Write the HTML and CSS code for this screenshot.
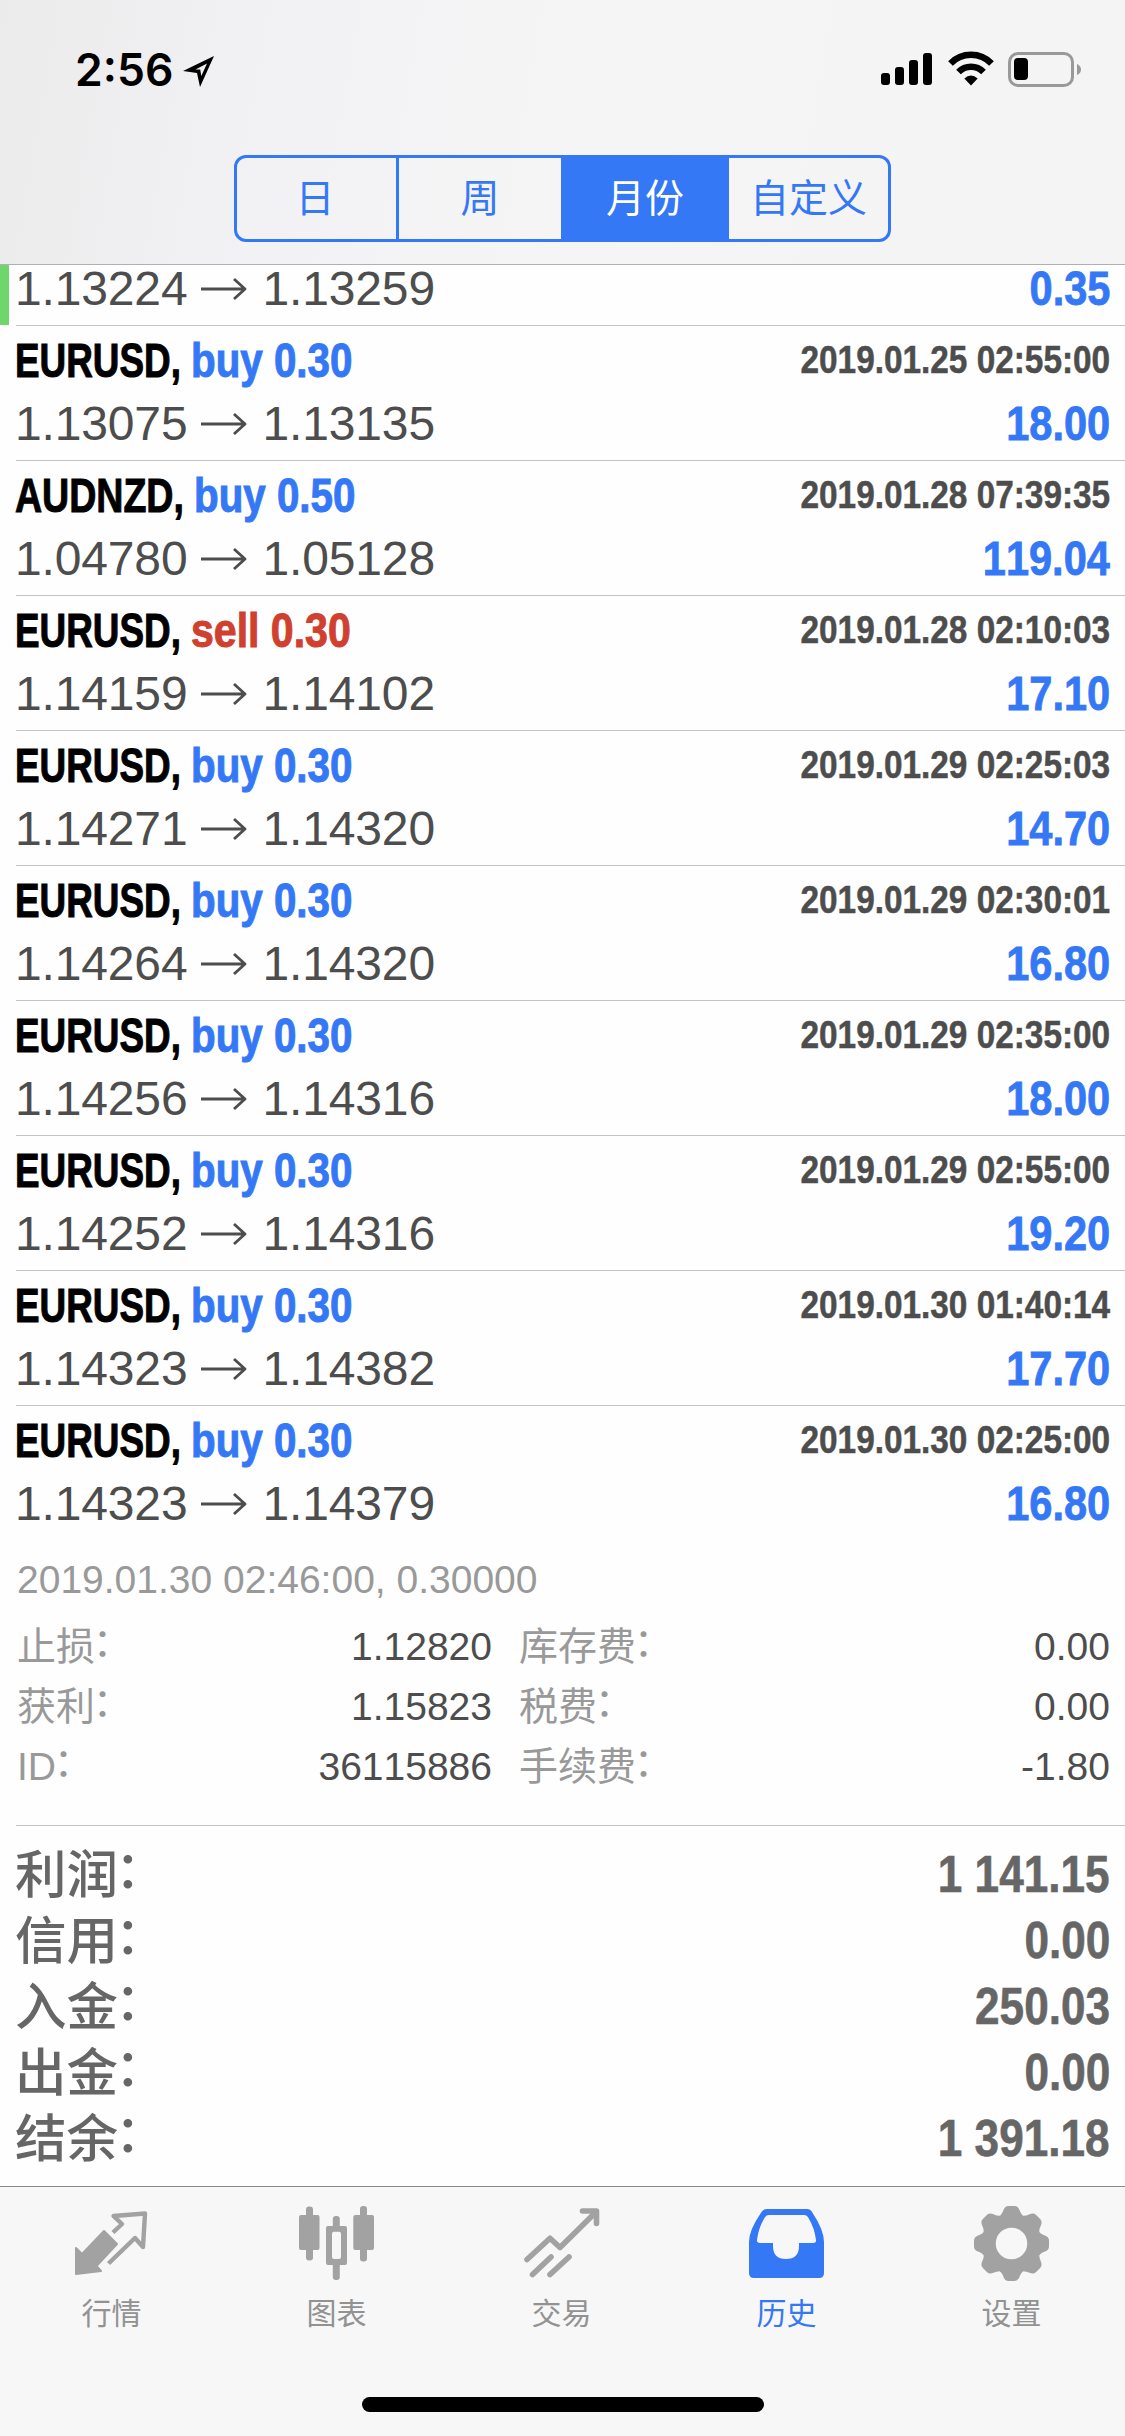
FILE: index.html
```html
<!DOCTYPE html>
<html lang="zh-CN">
<head>
<meta charset="utf-8">
<title>历史</title>
<link rel="stylesheet" href="styles.css">
</head>
<body>
<svg class="defs" width="0" height="0">
  <symbol id="arrow" viewBox="0 0 48 24"><path d="M0 13H44M33 3L44 13L33 23" fill="none" stroke="currentColor" stroke-width="2.8" stroke-linejoin="round"/></symbol>
</svg>

<header class="header">
  <div class="status">
    <span class="time">2:56</span>
    <svg class="location" width="36" height="36" viewBox="0 0 36 36"><path fill-rule="evenodd" d="M3 18L34 3L20 34L17 20ZM15.500 16.600L27 10.500L21.300 23L20.200 16.400Z"/></svg>
    <div class="indicators">
      <svg width="52" height="34" viewBox="0 0 52 34"><rect x="0" y="21" width="9" height="12" rx="3"/><rect x="14" y="15" width="9" height="18" rx="3"/><rect x="28" y="8" width="9" height="25" rx="3"/><rect x="42" y="1" width="9" height="32" rx="3"/></svg>
      <svg width="46" height="34" viewBox="0 0 46 34"><path d="M2.500 11.500A28.500 28.500 0 0 1 43.500 11.500M10.500 20A17.500 17.500 0 0 1 35.500 20" fill="none" stroke="#000" stroke-width="6.500"/><path d="M23 33.500L16.300 26.500Q23 20.500 29.700 26.500Z"/></svg>
      <svg width="74" height="36" viewBox="0 0 74 36"><rect x="1.500" y="1.500" width="63" height="32" rx="8.500" fill="none" stroke="#999" stroke-width="3"/><rect x="6" y="6" width="14" height="22" rx="4"/><path d="M69 12Q73 14 73 17.500T69 23Z" fill="#999"/></svg>
    </div>
  </div>
  <nav class="segments">
    <span class="segment segment-ruled">日</span><span class="segment">周</span><span class="segment segment-on">月份</span><span class="segment">自定义</span>
  </nav>
</header>

<main class="content">
  <section class="deal deal-cut">
    <div class="prices"><span>1.13224</span><svg class="arrow"><use href="#arrow"/></svg><span>1.13259</span><b class="profit">0.35</b></div>
  </section>
  <section class="deal">
    <div class="title"><b class="symbol">EURUSD,</b><b class="side">buy 0.30</b><b class="date">2019.01.25 02:55:00</b></div>
    <div class="prices"><span>1.13075</span><svg class="arrow"><use href="#arrow"/></svg><span>1.13135</span><b class="profit">18.00</b></div>
  </section>
  <section class="deal">
    <div class="title"><b class="symbol symbol-wide">AUDNZD,</b><b class="side">buy 0.50</b><b class="date">2019.01.28 07:39:35</b></div>
    <div class="prices"><span>1.04780</span><svg class="arrow"><use href="#arrow"/></svg><span>1.05128</span><b class="profit">119.04</b></div>
  </section>
  <section class="deal">
    <div class="title"><b class="symbol">EURUSD,</b><b class="side side-sell">sell 0.30</b><b class="date">2019.01.28 02:10:03</b></div>
    <div class="prices"><span>1.14159</span><svg class="arrow"><use href="#arrow"/></svg><span>1.14102</span><b class="profit">17.10</b></div>
  </section>
  <section class="deal">
    <div class="title"><b class="symbol">EURUSD,</b><b class="side">buy 0.30</b><b class="date">2019.01.29 02:25:03</b></div>
    <div class="prices"><span>1.14271</span><svg class="arrow"><use href="#arrow"/></svg><span>1.14320</span><b class="profit">14.70</b></div>
  </section>
  <section class="deal">
    <div class="title"><b class="symbol">EURUSD,</b><b class="side">buy 0.30</b><b class="date">2019.01.29 02:30:01</b></div>
    <div class="prices"><span>1.14264</span><svg class="arrow"><use href="#arrow"/></svg><span>1.14320</span><b class="profit">16.80</b></div>
  </section>
  <section class="deal">
    <div class="title"><b class="symbol">EURUSD,</b><b class="side">buy 0.30</b><b class="date">2019.01.29 02:35:00</b></div>
    <div class="prices"><span>1.14256</span><svg class="arrow"><use href="#arrow"/></svg><span>1.14316</span><b class="profit">18.00</b></div>
  </section>
  <section class="deal">
    <div class="title"><b class="symbol">EURUSD,</b><b class="side">buy 0.30</b><b class="date">2019.01.29 02:55:00</b></div>
    <div class="prices"><span>1.14252</span><svg class="arrow"><use href="#arrow"/></svg><span>1.14316</span><b class="profit">19.20</b></div>
  </section>
  <section class="deal">
    <div class="title"><b class="symbol">EURUSD,</b><b class="side">buy 0.30</b><b class="date">2019.01.30 01:40:14</b></div>
    <div class="prices"><span>1.14323</span><svg class="arrow"><use href="#arrow"/></svg><span>1.14382</span><b class="profit">17.70</b></div>
  </section>
  <section class="deal deal-open">
    <div class="title"><b class="symbol">EURUSD,</b><b class="side">buy 0.30</b><b class="date">2019.01.30 02:25:00</b></div>
    <div class="prices"><span>1.14323</span><svg class="arrow"><use href="#arrow"/></svg><span>1.14379</span><b class="profit">16.80</b></div>
    <div class="details">
      <p class="closed">2019.01.30 02:46:00, 0.30000</p>
      <dl class="facts">
        <dt>止损<span class="colon">：</span></dt><dd>1.12820</dd><dt>库存费<span class="colon">：</span></dt><dd>0.00</dd>
        <dt>获利<span class="colon">：</span></dt><dd>1.15823</dd><dt>税费<span class="colon">：</span></dt><dd>0.00</dd>
        <dt>ID<span class="colon">：</span></dt><dd>36115886</dd><dt>手续费<span class="colon">：</span></dt><dd>-1.80</dd>
      </dl>
    </div>
  </section>
  <section class="totals">
    <div class="total"><span>利润<span class="colon">：</span></span><b>1 141.15</b></div>
    <div class="total"><span>信用<span class="colon">：</span></span><b>0.00</b></div>
    <div class="total"><span>入金<span class="colon">：</span></span><b>250.03</b></div>
    <div class="total"><span>出金<span class="colon">：</span></span><b>0.00</b></div>
    <div class="total"><span>结余<span class="colon">：</span></span><b>1 391.18</b></div>
  </section>
</main>

<footer class="footer">
  <nav class="tabs">
    <a class="tab"><svg class="icon" viewBox="0 0 75 75"><path fill="currentColor" stroke="currentColor" stroke-width="2" stroke-linejoin="round" d="M1 42L7 48L29 25L42 38L21.500 60L26 65L1 68Z"/><path d="M38 26.500L47 18L38.500 10L70 7.500L68 41L60 32L33.500 57.500" fill="none" stroke="currentColor" stroke-width="4.400" stroke-linejoin="round"/></svg>行情</a>
    <a class="tab"><svg class="icon" viewBox="0 0 75 75"><g fill="currentColor"><rect x="6" y="0.500" width="7" height="54" rx="3"/><rect x="-1" y="9" width="20.500" height="35" rx="2"/><rect x="60" y="0" width="7" height="55.500" rx="3"/><rect x="53.300" y="9" width="20.700" height="35" rx="2"/><rect x="32.800" y="10" width="7" height="14" rx="3"/><rect x="32.800" y="55" width="7" height="19" rx="3"/><path fill-rule="evenodd" d="M28 20H45Q47 20 47 22V57Q47 59 45 59H28Q26 59 26 57V22Q26 20 28 20ZM34 25.700Q32 25.700 32 27.700V51Q32 53 34 53H39Q41 53 41 51V27.700Q41 25.700 39 25.700Z"/></g></svg>图表</a>
    <a class="tab"><svg class="icon" viewBox="0 0 75 75"><path d="M2 53.500L25 32.300L35 41.500L71 6M57.500 5H71.500V17.500M7.500 68.500L26 51M25 68.500L44 51" fill="none" stroke="currentColor" stroke-width="5.600" stroke-linecap="round" stroke-linejoin="round"/></svg>交易</a>
    <a class="tab tab-on"><svg class="icon" viewBox="0 0 75 75"><path fill="currentColor" fill-rule="evenodd" d="M17 3H57Q60.500 3 62 6Q74 24 74 36V67Q74 72 69 72H4Q-1 72 -1 67V36Q-1 24 11.500 6Q13.500 3 17 3ZM19 9Q16 9 14.500 12Q8.500 22 7 34Q6.800 37 10 37H23V40Q23 53 36 53Q49 53 49 40V37H63Q66.300 37 66 34Q64.500 22 58.500 12Q57 9 54 9Z"/></svg>历史</a>
    <a class="tab"><svg class="icon" viewBox="0 0 75 75"><defs><path id="tooth" d="M22 12Q27 9 28.500 4Q30 0 33.500 0H39.500Q43 0 44.500 4Q46 9 51 12V20H22Z"/></defs><g fill="currentColor"><circle cx="36.500" cy="37.500" r="22.500" fill="none" stroke="currentColor" stroke-width="13.500"/><use href="#tooth"/><use href="#tooth" transform="rotate(45 36.500 37.500)"/><use href="#tooth" transform="rotate(90 36.500 37.500)"/><use href="#tooth" transform="rotate(135 36.500 37.500)"/><use href="#tooth" transform="rotate(180 36.500 37.500)"/><use href="#tooth" transform="rotate(225 36.500 37.500)"/><use href="#tooth" transform="rotate(270 36.500 37.500)"/><use href="#tooth" transform="rotate(315 36.500 37.500)"/></g></svg>设置</a>
  </nav>
  <div class="home"></div>
</footer>
</body>
</html>
```
FILE: styles.css
```css
* { box-sizing: border-box; margin: 0; }

body {
  width: 1125px;
  height: 2436px;
  display: flex;
  flex-direction: column;
  overflow: hidden;
  background: #fefefe;
  color: #4d4d4d;
  font-family: "Liberation Sans", "Noto Sans CJK SC", sans-serif;
  font-size: 48px;
  font-kerning: none;
  white-space: nowrap;
}

.defs { position: absolute; }
svg { display: block; flex: none; overflow: visible; }

/* header */
.header {
  height: 265px;
  flex: none;
  border-bottom: 1px solid #b0b0b2;
  background: linear-gradient(100deg, #ebebec 0%, #f2f2f4 25%, #f5f5f6 50%, #f4f4f5 100%);
}
.status {
  height: 155px;
  padding: 53px 43px 0 75px;
  display: flex;
  align-items: flex-start;
  color: #000;
}
.time {
  width: 105px;
  font: 600 44.5px/34px Inter, sans-serif;
}
.indicators { display: flex; gap: 14.5px; margin: -1px 0 0 auto; }

.segments {
  width: 657px;
  height: 87px;
  margin: 0 auto;
  display: grid;
  grid-template-columns: 162px 162px 168px 159px;
  border: 3px solid #3478f6;
  border-radius: 12px;
  color: #3478f6;
  font-size: 39px;
  line-height: 81px;
  text-align: center;
}
.segment-ruled { border-right: 3px solid #3478f6; padding-right: 3px; }
.segment-on { background: #3478f6; color: #fff; }

/* deals */
.deal {
  height: 135px;
  margin-left: 16px;
  padding-top: 5px;
  border-bottom: 1px solid #c5c5c8;
}
.deal-cut {
  height: 61px;
  padding-top: 0;
  position: relative;
}
.deal-cut .prices { line-height: 48px; }
.deal-cut::before {
  content: "";
  position: absolute;
  left: -16px;
  top: 0;
  width: 9px;
  height: 60px;
  background: #6fd66c;
}
.deal-open { height: 420px; }

.title, .prices { display: flex; padding-right: 15px; margin-left: -1px; }
.title { height: 60px; line-height: 60px; }
.prices { height: 66px; line-height: 66px; }

.symbol, .side {
  transform-origin: left;
  -webkit-text-stroke: 1px currentColor;
}
.symbol { width: 176px; color: #000; transform: scaleX(.768); }
.symbol-wide { width: 179px; transform: scaleX(.782); }
.side { color: #3478f6; transform: scaleX(.84); }
.side-sell { color: #d0402f; transform: scaleX(.855); }
.date {
  margin-left: auto;
  font-size: 39px;
  line-height: 58px;
  transform: scaleX(.855);
  transform-origin: right;
  -webkit-text-stroke: .5px currentColor;
}
.arrow { width: 48px; height: 24px; margin: 20px 13px 0 14px; }
.prices span { letter-spacing: -.15px; }
.deal-cut .arrow { margin-top: 11px; }
.profit {
  margin-left: auto;
  color: #3478f6;
  transform: scaleX(.865);
  transform-origin: right;
  -webkit-text-stroke: .8px currentColor;
}

/* expanded deal */
.details {
  padding: 13px 15px 0 1px;
  font-size: 39px;
  line-height: 60px;
}
.closed { color: #999; }
.facts {
  margin-top: 7px;
  display: grid;
  grid-template-columns: 200px 275px 200px 1fr;
}
.facts dt { color: #999; }
.facts dd { text-align: right; }
.facts dt:nth-of-type(even) { padding-left: 27px; }
.colon {
  display: inline-block;
  margin-left: -.06em;
  line-height: 1;
  vertical-align: .1em;
}

/* totals */
.totals {
  height: 360px;
  padding: 16px 15px 0;
  color: #666;
}
.total {
  height: 66px;
  display: flex;
  justify-content: space-between;
  font-size: 51.500px;
  font-weight: 500;
  line-height: 66px;
}
.total b {
  font-size: 51px;
  transform: scaleX(.865);
  transform-origin: right;
  -webkit-text-stroke: .6px currentColor;
}

/* tab bar */
.footer {
  height: 250px;
  flex: none;
  border-top: 1px solid #88888a;
  background: #f7f7f7;
}
.tabs { height: 210px; display: grid; grid-template-columns: repeat(5, 1fr); }
.tab {
  padding: 19px 2px 0 0;
  display: flex;
  flex-direction: column;
  align-items: center;
  color: #929292;
  font-size: 30px;
  line-height: 40px;
}
.icon { width: 75px; height: 75px; margin: 0 -1px 13px 1px; color: #a2a2a2; }
.tab-on, .tab-on .icon { color: #3478f6; }
.home {
  width: 402px;
  height: 15px;
  margin: 0 auto;
  border-radius: 8px;
  background: #000;
}
```
